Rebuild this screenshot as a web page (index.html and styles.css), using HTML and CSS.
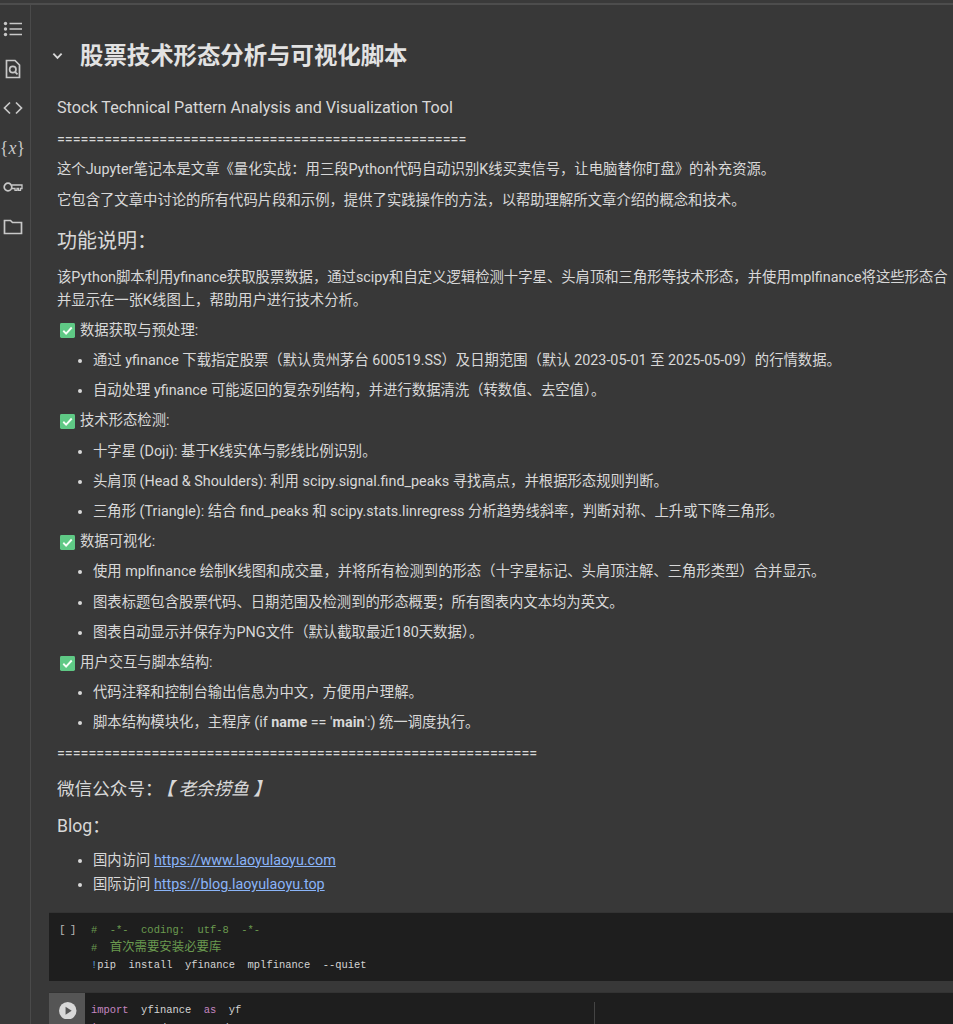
FILE: index.html
```html
<!DOCTYPE html>
<html lang="zh">
<head>
<meta charset="utf-8">
<title>股票技术形态分析与可视化脚本</title>
<link rel="stylesheet" href="styles.css">
</head>
<body>
<div class="topbar"></div>
<div class="app">
  <nav class="rail">
    <svg class="ic" viewBox="0 0 20 20"><circle cx="2.5" cy="4.500" r="1.700" class="f"/><circle cx="2.500" cy="10" r="1.700" class="f"/><circle cx="2.500" cy="15.500" r="1.700" class="f"/><path d="M6.500 4.500h12.500M6.500 10h12.500M6.500 15.500h12.500" class="s"/></svg>
    <svg class="ic" viewBox="0 0 20 20"><path d="M3.500 1.500h8.500l4.500 4.500v12.500h-13z" class="s"/><circle cx="9.800" cy="10.500" r="3.200" class="s"/><path d="M12 12.800l2.500 2.500" class="s"/></svg>
    <svg class="ic" viewBox="0 0 20 20"><path d="M7 4.500l-5.500 5.500 5.500 5.500M13 4.500l5.500 5.500-5.500 5.500" class="s"/></svg>
    <span class="var">{<i>x</i>}</span>
    <svg class="ic" viewBox="0 0 20 20"><circle cx="5" cy="10" r="3.800" class="s"/><path d="M8.800 8h10.200v3.500h-1.500v1.800h-2v-1.800h-1.500v1.800h-2v-1.800H8.800" class="s thin"/></svg>
    <svg class="ic" viewBox="0 0 20 20"><path d="M1.500 3.500h6l2 2h9v11h-17z" class="s"/></svg>
  </nav>
  <main class="nb">
    <section class="md">
      <h1 class="title"><svg class="chev" viewBox="0 0 12 8"><path d="M1.500 1.500L6 6l4.500-4.500"/></svg>股票技术形态分析与可视化脚本</h1>
      <p class="lead">Stock Technical Pattern Analysis and Visualization Tool</p>
      <p>====================================================</p>
      <p>这个Jupyter笔记本是文章《量化实战：用三段Python代码自动识别K线买卖信号，让电脑替你盯盘》的补充资源。</p>
      <p>它包含了文章中讨论的所有代码片段和示例，提供了实践操作的方法，以帮助理解所文章介绍的概念和技术。</p>
      <h2>功能说明：</h2>
      <p>该Python脚本利用yfinance获取股票数据，通过scipy和自定义逻辑检测十字星、头肩顶和三角形等技术形态，并使用mplfinance将这些形态合并显示在一张K线图上，帮助用户进行技术分析。</p>
      <p class="chk"><svg class="tick" viewBox="0 0 16 16"><rect width="16" height="16" rx="1.500"/><path d="M3.500 8.300l3 3 6-6.500"/></svg>数据获取与预处理:</p>
      <ul>
        <li>通过 yfinance 下载指定股票（默认贵州茅台 600519.SS）及日期范围（默认 2023-05-01 至 2025-05-09）的行情数据。</li>
        <li>自动处理 yfinance 可能返回的复杂列结构，并进行数据清洗（转数值、去空值）。</li>
      </ul>
      <p class="chk"><svg class="tick" viewBox="0 0 16 16"><rect width="16" height="16" rx="1.500"/><path d="M3.500 8.300l3 3 6-6.500"/></svg>技术形态检测:</p>
      <ul>
        <li>十字星 (Doji): 基于K线实体与影线比例识别。</li>
        <li>头肩顶 (Head &amp; Shoulders): 利用 scipy.signal.find_peaks 寻找高点，并根据形态规则判断。</li>
        <li>三角形 (Triangle): 结合 find_peaks 和 scipy.stats.linregress 分析趋势线斜率，判断对称、上升或下降三角形。</li>
      </ul>
      <p class="chk"><svg class="tick" viewBox="0 0 16 16"><rect width="16" height="16" rx="1.500"/><path d="M3.500 8.300l3 3 6-6.500"/></svg>数据可视化:</p>
      <ul>
        <li>使用 mplfinance 绘制K线图和成交量，并将所有检测到的形态（十字星标记、头肩顶注解、三角形类型）合并显示。</li>
        <li>图表标题包含股票代码、日期范围及检测到的形态概要；所有图表内文本均为英文。</li>
        <li>图表自动显示并保存为PNG文件（默认截取最近180天数据）。</li>
      </ul>
      <p class="chk"><svg class="tick" viewBox="0 0 16 16"><rect width="16" height="16" rx="1.500"/><path d="M3.500 8.300l3 3 6-6.500"/></svg>用户交互与脚本结构:</p>
      <ul>
        <li>代码注释和控制台输出信息为中文，方便用户理解。</li>
        <li>脚本结构模块化，主程序 (if <b>name</b> == '<b>main</b>':) 统一调度执行。</li>
      </ul>
      <p>=============================================================</p>
      <h3>微信公众号：<em>【 老余捞鱼 】</em></h3>
      <h3>Blog：</h3>
      <ul class="links">
        <li>国内访问 <a href="#">https://www.laoyulaoyu.com</a></li>
        <li>国际访问 <a href="#">https://blog.laoyulaoyu.top</a></li>
      </ul>
    </section>
    <section class="cell">
      <div class="gutter"><span class="br">[ ]</span></div>
      <pre class="code"><span class="cm">#  -*-  coding:  utf-8  -*-
#  <span class="zh">首次需要安装必要库</span></span>
<span class="bang">!</span>pip  install  yfinance  mplfinance  --quiet</pre>
    </section>
    <section class="cell last">
      <div class="gutter run"><svg class="play" viewBox="0 0 20 20"><circle cx="10" cy="10" r="10"/><path d="M7.500 5.500l7 4.500-7 4.500z"/></svg></div>
      <pre class="code"><span class="kw">import</span>  yfinance  <span class="kw">as</span>  yf
<span class="kw">import</span>  pandas  <span class="kw">as</span>  pd</pre>
      <div class="ruler"></div>
    </section>
  </main>
</div>
</body>
</html>
```
FILE: styles.css
```css
html, body { margin: 0; height: 100%; overflow: hidden; }
body { background: #383838; color: #d8d8d8; font: 14.35px/22.2px Roboto, "Noto Sans CJK SC", sans-serif; }
.topbar { background: #3a3a3a; border-bottom: 2px solid #4d4d4d; box-sizing: border-box; height: 5px; }
.app { display: flex; height: 1019px; }
.rail { width: 30px; flex: none; border-right: 1px solid #4a4a4a; display: flex; flex-direction: column; align-items: center; gap: 19.500px; padding-top: 14px; }
.ic { width: 20px; height: 20px; display: block; margin-left: -5px; }
.s { fill: none; stroke: #c8c8c8; stroke-width: 1.700; }
.thin { stroke-width: 1.300; }
.f { fill: #c8c8c8; }
.var { font: 18px/20px "Liberation Serif", serif; color: #c8c8c8; margin-left: -5px; height: 20px; white-space: nowrap; }
.nb { flex: 1; min-width: 0; }
.md { padding: 0 0 0 26px; height: 907px; box-sizing: border-box; }
.md p { margin: 0 0 8px; }
.title { display: flex; align-items: center; margin: 0 0 22px -5px; padding-top: 32px; font-size: 23.400px; line-height: 38px; font-weight: 700; color: #e2e2e2; }
.chev { width: 11px; height: 8px; margin-right: 17px; fill: none; stroke: #d8d8d8; stroke-width: 2; }
.md .lead { font-size: 16.160px; margin-bottom: 10px; }
h2 { font-size: 20px; font-weight: 400; line-height: 30px; margin: 14px 0 11.500px; }
h3 { font-size: 17.600px; font-weight: 400; line-height: 26px; margin: 11px 0; }
em { margin-left: -6px; }
.chk { display: flex; align-items: center; padding-left: 3px; }
.tick { width: 15px; height: 15px; margin-right: 5px; }
.tick rect { fill: #5fc985; }
.tick path { fill: none; stroke: #f4fff6; stroke-width: 2; }
ul { margin: 0; padding: 0 0 0 36px; }
li { margin-bottom: 8px; }
.links li { margin-bottom: 2px; }
a { color: #8ab4f8; }
.cell { display: flex; background: #1e1e1e; margin: 0 0 11px 18px; height: 69px; border-top: 1px solid #333; box-sizing: border-box; position: relative; }
.gutter { width: 36px; flex: none; color: #b8b8b8; font: 11px/17px "Liberation Mono", monospace; letter-spacing: -1.200px; padding: 9px 0 0 10px; box-sizing: border-box; white-space: pre; }
.run { background: #555; padding: 8.500px 0 0 10px; }
.play { width: 17.500px; height: 17.500px; display: block; }
.play circle { fill: #d8d8d8; }
.play path { fill: #555; }
.code { margin: 0; padding: 9px 0 0 6px; font: 10.450px/17.500px "Liberation Mono", "Noto Sans CJK SC", monospace; color: #d4d4d4; white-space: pre; }
.cm { color: #6a9a4f; }
.zh { font-size: 12.400px; line-height: 1; }
.bang { color: #569cd6; }
.kw { color: #c586c0; }
.last { height: 40px; margin-bottom: 0; }
.ruler { position: absolute; left: 545px; top: 9px; bottom: 0; width: 1px; background: #444; }
```
